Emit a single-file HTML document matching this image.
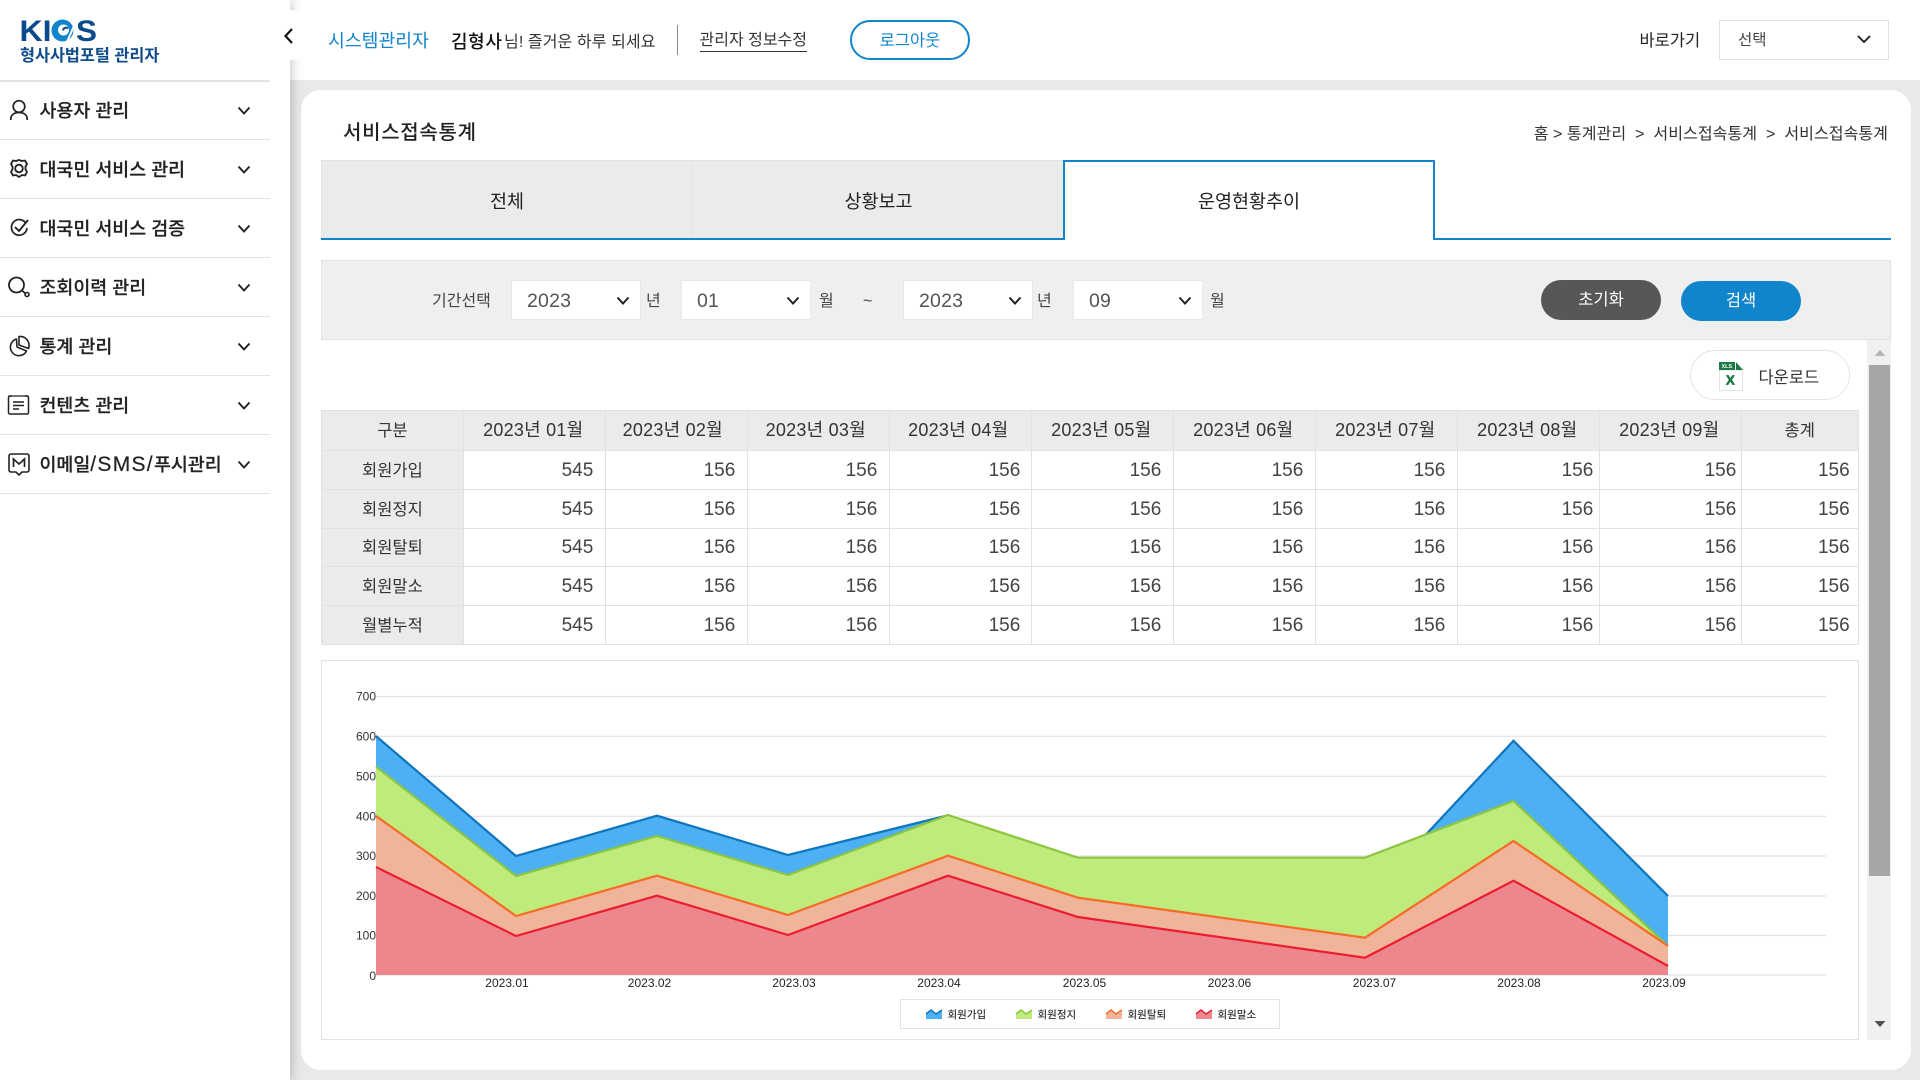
<!DOCTYPE html>
<html lang="ko"><head><meta charset="utf-8"><title>서비스접속통계</title>
<style>
*{box-sizing:border-box}
html,body{margin:0;padding:0;width:1920px;height:1080px;overflow:hidden;background:#e9e9e9;font-family:"Liberation Sans","Noto Sans CJK KR",sans-serif;color:#222}
.a{position:absolute;white-space:nowrap}
#hdr{left:0;top:0;width:1920px;height:80px;background:#fff}
#side{left:0;top:0;width:290px;height:1080px;background:#fff;box-shadow:0 0 12px rgba(0,0,0,.28)}
#toggle{left:265px;top:10px;width:50px;height:50px;border-radius:50%;background:#fff}
.mi{left:0;width:270px;height:59px;border-bottom:1.5px solid #e3e3e3;font-size:18.4px;font-weight:500;line-height:60px;padding-left:39.5px;color:#222;-webkit-text-stroke:.2px #222}
.mi svg.ch{position:absolute;left:236px;top:24px}
.mi svg.ic{position:absolute;left:6px;top:15px}
#card{left:301px;top:90px;width:1610px;height:980px;background:#fff;border-radius:20px}
.tab{top:160px;height:78px;background:#ebebeb;border:1px solid #e3e3e3;border-bottom:0;text-align:center;font-size:18.5px;line-height:82px;color:#222}
#search{left:321px;top:260px;width:1570px;height:80px;background:#efefef;border:1px solid #e3e3e3}
.sel{top:280px;width:130px;height:40px;background:#fff;border:1px solid #e8e8e8;font-size:19.5px;line-height:40px;padding-left:15px;color:#555;letter-spacing:.2px}
.sel svg{position:absolute;right:9px;top:14px}
.lb{font-size:16px;line-height:20px;top:292px;color:#444}
.btn{width:120px;height:40px;border-radius:20px;color:#fff;text-align:center;line-height:40px;font-size:16.5px}
table{position:absolute;left:321px;top:410px;width:1537.7px;height:234px;border-collapse:collapse;table-layout:fixed;font-size:19px;color:#444}
td,th{border:1px solid #e1e1e1;padding:0;font-weight:400}
th{background:#ebebeb;text-align:center;font-size:16.5px;color:#333;height:38.8px;padding-bottom:2px}
tr:first-child th{height:40px;font-size:18px;letter-spacing:.23px;padding-bottom:3px;padding-right:2px}
tr:first-child th.k{font-size:16.5px;letter-spacing:0;padding-right:0}
tr:first-child th:nth-child(3){padding-right:7px}
tr:first-child th:nth-child(4){padding-right:5px}
tr:first-child th:nth-child(5){padding-right:4px}
td{text-align:right;padding-right:11.5px;padding-top:2px}
td:nth-child(5){padding-right:10.5px}
td:nth-child(9){padding-right:5.5px}
td:nth-child(10){padding-right:4.5px}
td:nth-child(11){padding-right:8px}
</style></head><body>
<div class="a" id="hdr"></div>
<div class="a" id="card"></div>
<div class="a" id="side"></div>
<div class="a" id="toggle"></div>
<svg class="a" style="left:282px;top:26px" width="14" height="20" viewBox="0 0 14 20"><path d="M10 3 L3.5 10 L10 17" fill="none" stroke="#111" stroke-width="2.2"/></svg>

<!-- logo -->
<svg class="a" style="left:18px;top:16px" width="84" height="30" viewBox="0 0 84 30">
<text x="1.500" y="25" font-family="Liberation Sans" font-weight="700" font-size="30" fill="#0b4a8c" textLength="32" lengthAdjust="spacingAndGlyphs">KI</text>
<circle cx="44.500" cy="14.500" r="11" fill="#1185cc"/><circle cx="45.500" cy="14" r="5.500" fill="#fff"/><path d="M45 14.500a3 3 0 0 1 5-2" stroke="#0b4a8c" stroke-width="2" fill="none"/>
<path d="M49 26 L59 3" stroke="#fff" stroke-width="2"/>
<text x="58" y="25" font-family="Liberation Sans" font-weight="700" font-size="30" fill="#0b4a8c" textLength="21" lengthAdjust="spacingAndGlyphs">S</text>
</svg>
<div class="a" style="left:20px;top:45px;font-size:16.3px;font-weight:700;color:#0f4c8a;line-height:22px">형사사법포털 관리자</div>

<!-- menu -->
<div class="a" style="left:0;top:80px;width:270px;height:1.5px;background:#e3e3e3"></div>
<div class="a mi" style="top:81px">사용자 관리<svg class="ic" width="24" height="28" viewBox="0 0 24 28"><circle cx="13" cy="10.500" r="5.800" fill="none" stroke="#222" stroke-width="1.700"/><path d="M4.800 24v-1c0-4 3.200-6.500 8.200-6.500s8.200 2.500 8.200 6.500v1" fill="none" stroke="#222" stroke-width="1.700"/></svg><svg class="ch" width="16" height="12" viewBox="0 0 16 12"><path d="M2.500 2.500 L8 8.500 L13.500 2.500" fill="none" stroke="#222" stroke-width="1.900"/></svg></div>
<div class="a mi" style="top:140px">대국민 서비스 관리<svg class="ic" width="24" height="28" viewBox="0 0 24 28"><path d="M13 5l3 1 3-.5 2 3.500-1.500 2.500 0 3 1.500 2.500-2 3.500-3-.5-3 2-3-2-3 .5-2-3.500 1.500-2.500 0-3-1.500-2.500 2-3.500 3 .5z" fill="none" stroke="#222" stroke-width="1.800" stroke-linejoin="round"/><circle cx="13" cy="13.500" r="3.800" fill="none" stroke="#222" stroke-width="1.800"/></svg><svg class="ch" width="16" height="12" viewBox="0 0 16 12"><path d="M2.500 2.500 L8 8.500 L13.500 2.500" fill="none" stroke="#222" stroke-width="1.900"/></svg></div>
<div class="a mi" style="top:199px">대국민 서비스 검증<svg class="ic" width="24" height="28" viewBox="0 0 24 28"><path d="M20 9.500A7.800 7.800 0 1 0 21 14" fill="none" stroke="#222" stroke-width="1.700"/><path d="M9 13l4 4 9-11" fill="none" stroke="#222" stroke-width="1.900"/></svg><svg class="ch" width="16" height="12" viewBox="0 0 16 12"><path d="M2.500 2.500 L8 8.500 L13.500 2.500" fill="none" stroke="#222" stroke-width="1.900"/></svg></div>
<div class="a mi" style="top:258px">조회이력 관리<svg class="ic" width="24" height="28" viewBox="0 0 24 28"><circle cx="10.500" cy="12" r="7.500" fill="none" stroke="#222" stroke-width="1.800"/><path d="M16 17.500l4 3.500" stroke="#222" stroke-width="1.800"/><circle cx="21" cy="21.500" r="2" fill="none" stroke="#222" stroke-width="1.600"/></svg><svg class="ch" width="16" height="12" viewBox="0 0 16 12"><path d="M2.500 2.500 L8 8.500 L13.500 2.500" fill="none" stroke="#222" stroke-width="1.900"/></svg></div>
<div class="a mi" style="top:317px">통계 관리<svg class="ic" width="24" height="28" viewBox="0 0 24 28"><path d="M10.500 7A8.500 8.500 0 1 0 20.500 19L11 15z" fill="none" stroke="#222" stroke-width="1.600" stroke-linejoin="round"/><path d="M13 4.500a9 9 0 0 1 9.500 12L13 13z" fill="none" stroke="#222" stroke-width="1.600" stroke-linejoin="round"/></svg><svg class="ch" width="16" height="12" viewBox="0 0 16 12"><path d="M2.500 2.500 L8 8.500 L13.500 2.500" fill="none" stroke="#222" stroke-width="1.900"/></svg></div>
<div class="a mi" style="top:376px">컨텐츠 관리<svg class="ic" width="24" height="28" viewBox="0 0 24 28"><path d="M6 5H4a1.500 1.500 0 0 0-1.500 1.500v15A1.500 1.500 0 0 0 4 23h17a1.500 1.500 0 0 0 1.500-1.500v-15A1.500 1.500 0 0 0 21 5h-2" fill="none" stroke="#222" stroke-width="1.500"/><path d="M2.500 5H22.500" stroke="#222" stroke-width="1.200"/><path d="M7 11h11M7 14.500h11M7 18h6" stroke="#222" stroke-width="1.500"/></svg><svg class="ch" width="16" height="12" viewBox="0 0 16 12"><path d="M2.500 2.500 L8 8.500 L13.500 2.500" fill="none" stroke="#222" stroke-width="1.900"/></svg></div>
<div class="a mi" style="top:435px">이메일<span style="font-size:21px;letter-spacing:1.3px">/SMS/</span>푸시관리<svg class="ic" width="24" height="28" viewBox="0 0 24 28"><path d="M5 4h16a2 2 0 0 1 2 2v14a2 2 0 0 1-2 2h-5l-3 3-3-3H5a2 2 0 0 1-2-2V6a2 2 0 0 1 2-2z" fill="none" stroke="#222" stroke-width="1.600"/><path d="M7.500 17V9l5.500 5 5.500-5v8" fill="none" stroke="#222" stroke-width="1.700"/></svg><svg class="ch" width="16" height="12" viewBox="0 0 16 12"><path d="M2.500 2.500 L8 8.500 L13.500 2.500" fill="none" stroke="#222" stroke-width="1.900"/></svg></div>

<!-- header -->
<div class="a" style="left:328px;top:28px;font-size:18.3px;line-height:26px;color:#1185cc">시스템관리자</div>
<div class="a" style="left:451px;top:28.500px;font-size:18px;line-height:26px;font-weight:500;color:#111;letter-spacing:.6px">김형사</div>
<div class="a" style="left:504px;top:31px;font-size:16px;line-height:24px;color:#333;letter-spacing:.1px">님! 즐거운 하루 되세요</div>
<div class="a" style="left:677px;top:25px;width:1px;height:30px;background:#888"></div>
<div class="a" style="left:699.500px;top:30px;font-size:16px;line-height:22px;color:#333;border-bottom:1px solid #333;height:21.500px">관리자 정보수정</div>
<div class="a" style="left:850px;top:20px;width:120px;height:40px;border:2px solid #1185cc;border-radius:20px;text-align:center;font-size:16.500px;line-height:38px;color:#1185cc">로그아웃</div>
<div class="a" style="left:1639.500px;top:30px;font-size:16.500px;line-height:22px;color:#222">바로가기</div>
<div class="a" style="left:1719px;top:20px;width:170px;height:40px;border:1.500px solid #e2e2e2;background:#fff;font-size:15.500px;line-height:39px;padding-left:18px;color:#444">선택<svg style="position:absolute;right:16px;top:12px" width="16" height="12" viewBox="0 0 16 12"><path d="M2 3 L8 9 L14 3" fill="none" stroke="#222" stroke-width="1.900"/></svg></div>

<!-- title -->
<div class="a" style="left:343px;top:118px;font-size:20px;line-height:30px;font-weight:500;color:#222;letter-spacing:.7px">서비스접속통계</div>
<div class="a" style="right:32px;top:122.500px;font-size:16.100px;line-height:22px;color:#333;white-space:pre">홈 &gt; 통계관리  &gt;  서비스접속통계  &gt;  서비스접속통계</div>

<!-- tabs -->
<div class="a tab" style="left:321px;width:372px">전체</div>
<div class="a tab" style="left:692px;width:373px">상황보고</div>
<div class="a" style="left:321px;top:238px;width:1570px;height:2px;background:#1185cc"></div>
<div class="a" style="left:1063px;top:160px;width:372px;height:80px;background:#fff;border:2px solid #1185cc;border-bottom:0;text-align:center;font-size:18.500px;line-height:80px;color:#222">운영현황추이</div>

<!-- search -->
<div class="a" id="search"></div>
<div class="a lb" style="left:432px">기간선택</div>
<div class="a sel" style="left:511px">2023<svg width="16" height="12" viewBox="0 0 16 12"><path d="M2.500 2.500 L8 8.500 L13.500 2.500" fill="none" stroke="#222" stroke-width="2"/></svg></div>
<div class="a lb" style="left:646px">년</div>
<div class="a sel" style="left:681px">01<svg width="16" height="12" viewBox="0 0 16 12"><path d="M2.500 2.500 L8 8.500 L13.500 2.500" fill="none" stroke="#222" stroke-width="2"/></svg></div>
<div class="a lb" style="left:819px">월</div>
<div class="a lb" style="left:863px">~</div>
<div class="a sel" style="left:903px">2023<svg width="16" height="12" viewBox="0 0 16 12"><path d="M2.500 2.500 L8 8.500 L13.500 2.500" fill="none" stroke="#222" stroke-width="2"/></svg></div>
<div class="a lb" style="left:1037px">년</div>
<div class="a sel" style="left:1073px">09<svg width="16" height="12" viewBox="0 0 16 12"><path d="M2.500 2.500 L8 8.500 L13.500 2.500" fill="none" stroke="#222" stroke-width="2"/></svg></div>
<div class="a lb" style="left:1210px">월</div>
<div class="a btn" style="left:1541px;top:280px;background:#575757">초기화</div>
<div class="a btn" style="left:1681px;top:281px;background:#1185cc">검색</div>

<!-- scrollbar -->
<div class="a" style="left:1867px;top:340px;width:24px;height:700px;background:#f0f0f0"></div>
<div class="a" style="left:1869px;top:365px;width:21px;height:511px;background:#a6a6a6"></div>
<svg class="a" style="left:1873px;top:348px" width="14" height="10"><path d="M1.500 8h11L7 2z" fill="#b5b5b5"/></svg>
<svg class="a" style="left:1873px;top:1019px" width="14" height="10"><path d="M1.500 2h11L7 8z" fill="#505050"/></svg>

<!-- download -->
<div class="a" style="left:1690px;top:350px;width:160px;height:50px;border:1px solid #e3e3e3;border-radius:25px;background:#fff"></div>
<svg class="a" style="left:1719px;top:361px" width="24" height="30" viewBox="0 0 24 30"><path d="M.5 9h23v20.500H.5z" fill="#fff" stroke="#e2e2e2"/><path d="M0 1h16v8H0z" fill="#1b7a43"/><path d="M17 1l7 8h-7z" fill="#1b7a43"/><text x="2.500" y="7" font-size="5.500" font-weight="700" fill="#fff" font-family="Liberation Sans">XLS</text><text x="7" y="23.500" font-size="13" font-weight="700" fill="#1b7a43" stroke="#1b7a43" stroke-width=".7" font-family="Liberation Sans">X</text></svg>
<div class="a" style="left:1758.500px;top:367px;font-size:16.500px;line-height:22px;color:#333">다운로드</div>

<!-- table -->
<table><colgroup><col style="width:141.800px"><col style="width:142px"><col style="width:142px"><col style="width:142px"><col style="width:142px"><col style="width:142px"><col style="width:142px"><col style="width:142px"><col style="width:142px"><col style="width:142px"><col></colgroup>
<tr><th class="k">구분</th><th>2023년 01월</th><th>2023년 02월</th><th>2023년 03월</th><th>2023년 04월</th><th>2023년 05월</th><th>2023년 06월</th><th>2023년 07월</th><th>2023년 08월</th><th>2023년 09월</th><th class="k">총계</th></tr>
<tr><th>회원가입</th><td>545</td><td>156</td><td>156</td><td>156</td><td>156</td><td>156</td><td>156</td><td>156</td><td>156</td><td>156</td></tr>
<tr><th>회원정지</th><td>545</td><td>156</td><td>156</td><td>156</td><td>156</td><td>156</td><td>156</td><td>156</td><td>156</td><td>156</td></tr>
<tr><th>회원탈퇴</th><td>545</td><td>156</td><td>156</td><td>156</td><td>156</td><td>156</td><td>156</td><td>156</td><td>156</td><td>156</td></tr>
<tr><th>회원말소</th><td>545</td><td>156</td><td>156</td><td>156</td><td>156</td><td>156</td><td>156</td><td>156</td><td>156</td><td>156</td></tr>
<tr><th>월별누적</th><td>545</td><td>156</td><td>156</td><td>156</td><td>156</td><td>156</td><td>156</td><td>156</td><td>156</td><td>156</td></tr>
</table>

<!-- chart -->
<div class="a" style="left:321px;top:660px;width:1538px;height:380px;border:1px solid #e2e2e2;background:#fff"></div>
<svg class="a" style="left:0;top:0" width="1920" height="1080" viewBox="0 0 1920 1080" font-family="Liberation Sans,Noto Sans CJK KR,sans-serif">
<g stroke="#e2e2e2" stroke-width="1.200"><path d="M376 696.500H1826M376 736.300H1826M376 776.300H1826M376 816.300H1826M376 856H1826M376 896H1826M376 935.500H1826M376 975H1826"/></g>
<path d="M376 736 L516 856 657 815.700 788 855 948 815.300 1078 900 1365 900 1513.500 740.700 1668 896 V975 H376Z" fill="#4cb0f2"/>
<path d="M376 736 L516 856 657 815.700 788 855 948 815.300 1078 900 1365 900 1513.500 740.700 1668 896" fill="none" stroke="#0f75bc" stroke-width="2.200"/>
<path d="M376 766.700 L516 876 657 836 788 875 948 815 1078 857.700 1365 857.700 1513.500 801 1668 946 V975 H376Z" fill="#bfea7c"/>
<path d="M376 766.700 L516 876 657 836 788 875 948 815 1078 857.700 1365 857.700 1513.500 801 1668 946" fill="none" stroke="#8cc63f" stroke-width="2.200"/>
<path d="M376 816 L516 916 657 875.700 788 915 948 855.700 1078 897.700 1365 937.700 1513.500 841 1668 946 V975 H376Z" fill="#f0b49b"/>
<path d="M376 816 L516 916 657 875.700 788 915 948 855.700 1078 897.700 1365 937.700 1513.500 841 1668 946" fill="none" stroke="#f96a24" stroke-width="2.200"/>
<path d="M376 867 L516 936 657 895.700 788 935 948 875.700 1078 917 1365 957.700 1513.500 880.700 1668 966 V975 H376Z" fill="#ec878e"/>
<path d="M376 867 L516 936 657 895.700 788 935 948 875.700 1078 917 1365 957.700 1513.500 880.700 1668 966" fill="none" stroke="#ed1c2e" stroke-width="2.200"/>
<g font-size="12" fill="#333" text-anchor="end"><text x="376" y="700.500">700</text><text x="376" y="740.500">600</text><text x="376" y="780.500">500</text><text x="376" y="820.500">400</text><text x="376" y="860">300</text><text x="376" y="900">200</text><text x="376" y="939.500">100</text><text x="376" y="980">0</text></g>
<g font-size="12" fill="#222" text-anchor="middle"><text x="507" y="987">2023.01</text><text x="649.500" y="987">2023.02</text><text x="794" y="987">2023.03</text><text x="939" y="987">2023.04</text><text x="1084.500" y="987">2023.05</text><text x="1229.500" y="987">2023.06</text><text x="1374.500" y="987">2023.07</text><text x="1519" y="987">2023.08</text><text x="1664" y="987">2023.09</text></g>
<rect x="900.500" y="999.500" width="379" height="29" fill="#fff" stroke="#e2e2e2"/>
<g font-size="10.500" font-weight="500" fill="#333"><text x="947.500" y="1018">회원가입</text><text x="1037.500" y="1018">회원정지</text><text x="1127.500" y="1018">회원탈퇴</text><text x="1217.500" y="1018">회원말소</text></g>
<path d="M926 1014l5-4 5 4 6-4v9h-16z" fill="#4cb0f2"/><path d="M926 1014l5-4 5 4 6-4" fill="none" stroke="#0f75bc" stroke-width="1.500"/>
<path d="M1016 1014l5-4 5 4 6-4v9h-16z" fill="#bfea7c"/><path d="M1016 1014l5-4 5 4 6-4" fill="none" stroke="#8cc63f" stroke-width="1.500"/>
<path d="M1106 1014l5-4 5 4 6-4v9h-16z" fill="#f0b49b"/><path d="M1106 1014l5-4 5 4 6-4" fill="none" stroke="#f96a24" stroke-width="1.500"/>
<path d="M1196 1014l5-4 5 4 6-4v9h-16z" fill="#ec878e"/><path d="M1196 1014l5-4 5 4 6-4" fill="none" stroke="#ed1c2e" stroke-width="1.500"/>
</svg>
</body></html>
